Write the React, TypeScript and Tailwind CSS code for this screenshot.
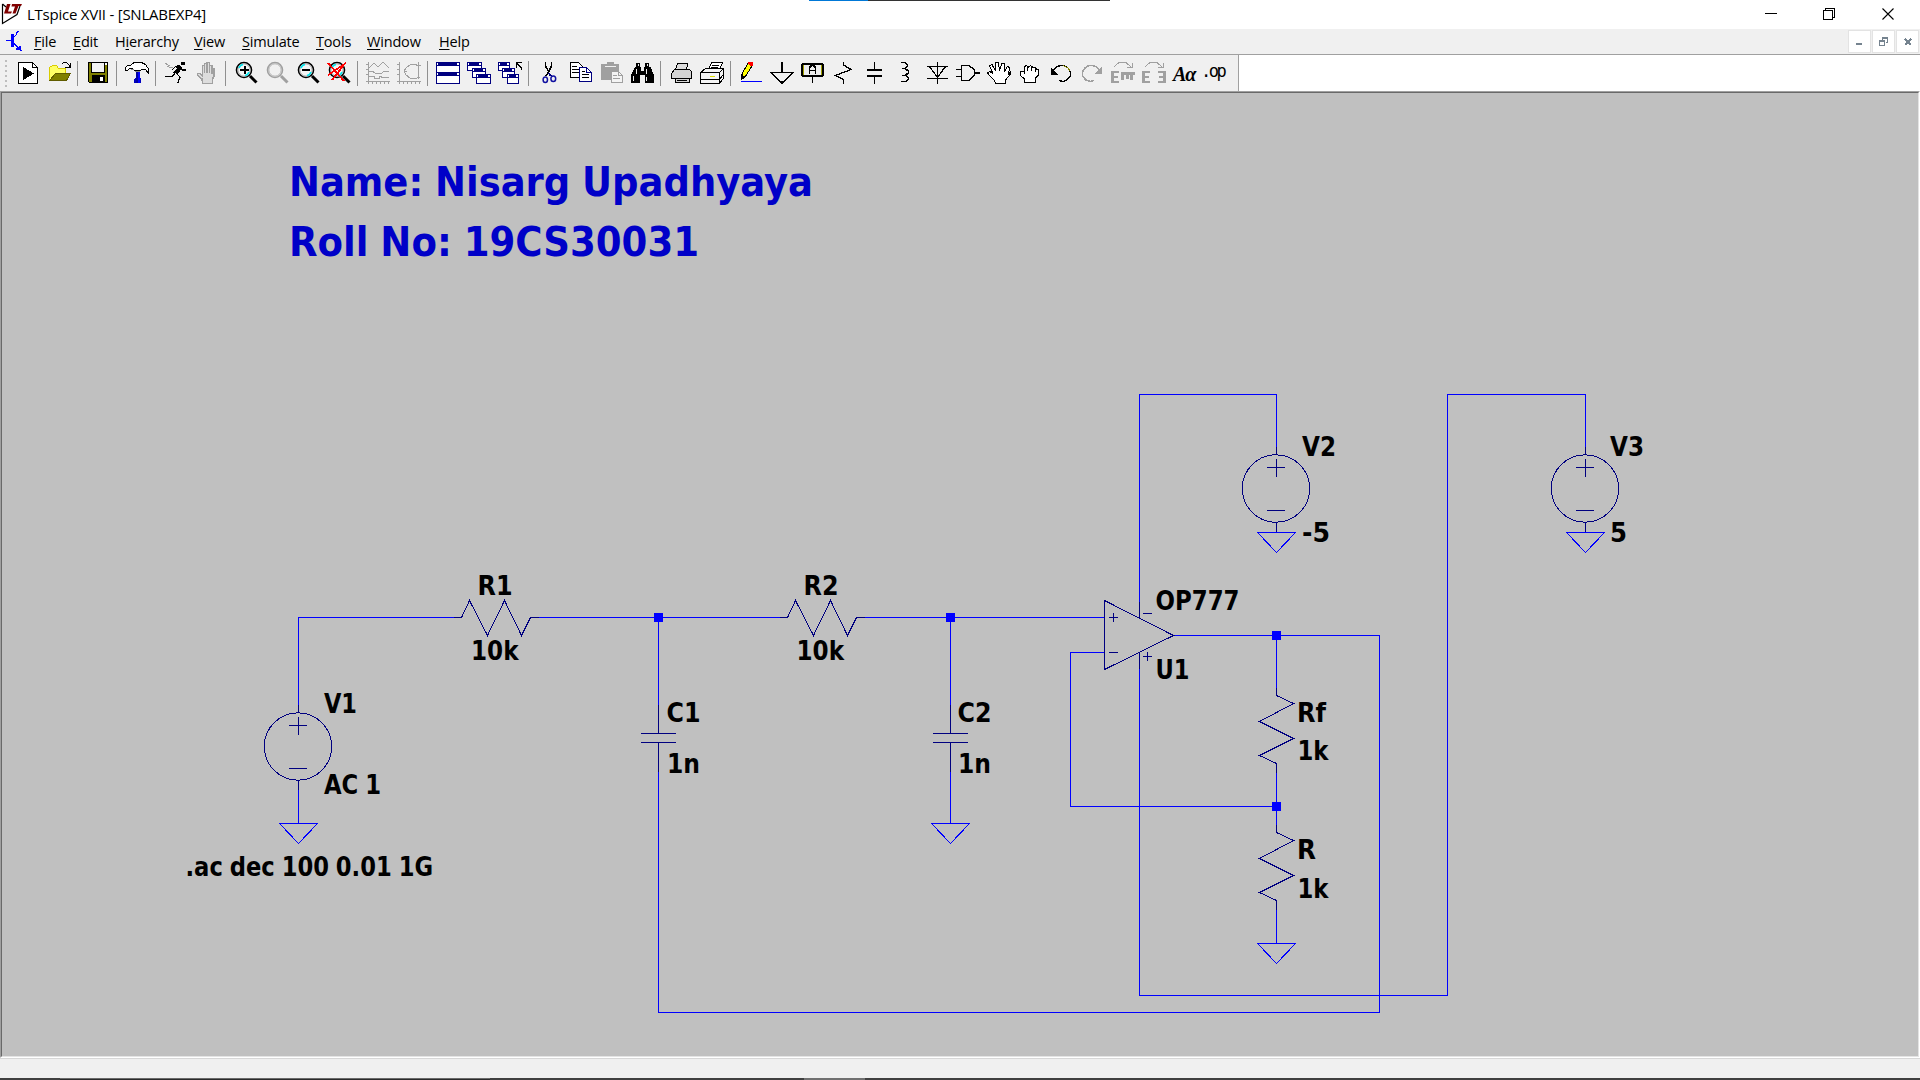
import React from "react";

type Children = { children?: React.ReactNode };

const Ico = ({ children }: Children) => (
  <span className="flex h-6 w-[31px] shrink-0 items-center pl-1">
    <svg width="24" height="24" viewBox="0 0 24 24" fill="none" stroke="#000" strokeWidth="1" shapeRendering="crispEdges">
      {children}
    </svg>
  </span>
);

const Sep = () => (
  <span className="flex h-6 w-2 shrink-0 pl-[3px]">
    <span className="h-[25px] w-px bg-[#909090]" />
  </span>
);

const G = "#a0a0a0";
const N = "#000080";

const Lens = ({ color = "#000", cyan = true, children }: Children & { color?: string; cyan?: boolean }) => (
  <Ico>
    <g shapeRendering="auto">
      <path d="M16 15L22.5 21.5" stroke={color} strokeWidth="3" />
      <circle cx="10" cy="9" r="7.5" stroke={color} strokeWidth="1.6" fill={cyan ? "#f4f4f4" : "none"} />
      <circle cx="10" cy="9" r="6.2" stroke={cyan ? "#a0a0a0" : "#b4b4b4"} strokeWidth="1" />
      {cyan && <path d="M5 7Q6 4 9 3.5M15 11Q14 14 11 14.5" stroke="#00e8f0" strokeWidth="1.6" />}
    </g>
    {children}
  </Ico>
);

const Win = ({ x, y, w, h }: { x: number; y: number; w: number; h: number }) => (
  <g stroke="none">
    <rect x={x} y={y} width={w} height={h} fill={N} />
    <rect x={x + 1} y={y + 4} width={w - 2} height={h - 5} fill="#fff" />
    <rect x={x + 1} y={y + 1} width="1" height="2" fill="#fff" />
    <rect x={x + w - 3} y={y + 1} width="2" height="2" fill="#fff" />
  </g>
);

const Toolbar = () => (
  <div className="flex h-9 w-[1239px] items-center border-r border-[#a0a0a0] bg-[#f0f0f0]">
    <div className="flex w-3 shrink-0 flex-col gap-[3px] pl-[5px]">
      {[0, 1, 2, 3, 4, 5].map((i) => (
        <span key={i} className="h-[2px] w-[2px] bg-[#bdbdbd]" />
      ))}
    </div>
    <Ico>
      <path d="M2.5 1.5H16.5L21.5 6.5V22.5H2.5Z" fill="#fff" />
      <path d="M16.5 1.5V6.5H21.5" />
      <path d="M7 6L18 12.5L7 19Z" fill="#000" stroke="none" />
    </Ico>
    <Ico>
      <path d="M2.5 19V6.5L5.5 4.5H9.5L11.5 7.5H18.5V12" fill="#ffff66" stroke="#d8cc00" />
      <path d="M2.5 19.5L8.5 12.5H23.5L19.5 19.5Z" fill="#808000" stroke="#605c00" />
      <path d="M14.5 3.5L16.5 1.5H19.5L22.5 4.5V6M23.5 2V6.5H18" />
    </Ico>
    <Sep />
    <Ico>
      <path d="M2.5 1.5H21.5V21.5H3.5L2.5 20Z" fill="#808000" />
      <path d="M5.5 1.5H18.5V11.5H5.5Z" fill="#f4f4f4" />
      <path d="M6 14H19V21H6Z" fill="#000" stroke="none" />
      <path d="M14 16H17V20H14ZM19 2H21V4H19Z" fill="#fff" stroke="none" />
    </Ico>
    <Sep />
    <Ico>
      <path d="M11 9H15V22H11Z" fill="#0000a0" stroke="none" />
      <path d="M13 9H15V22H13Z" fill="#0000ff" stroke="none" />
      <path d="M9 18L11 16V22H9ZM15 17H16V22H15Z" fill="#0000c0" stroke="none" />
      <path d="M0.5 9.5V6.5L2.5 4.5H5.5L7.5 2.5L9.5 1.5H16.5L20.5 3.5L23.5 8V12.5L20.5 8.5H17L15.5 9.5H9.5L7.5 7.5L4.5 7.5L2.5 9.5Z" fill="#fff" />
      <path d="M6 8.5H9M10 10H15" stroke="#888" />
    </Ico>
    <Sep />
    <Ico>
      <path d="M17 1H21V4H17Z" fill="#000" stroke="none" />
      <path d="M10 5L15 4L18 7L14 13L9 12L13 7Z" fill="#000" stroke="none" />
      <path d="M11 6L7.5 9.5M16 7L18 9L22 9M11 12L8.5 15.5H1M13 13L16 16L13.5 22.5" strokeWidth="1.4" />
      <path d="M1 2L4 4L6 4M3 5L7 7L9 6" stroke={G} />
    </Ico>
    <Ico>
      <path d="M7.5 22.5L7 18L2.5 14.5V12.5H5L7.5 15V4.5H9.5V12V2.5H12V12V1.5H14.5V12V4.5H17V13V7.5H19V15L17.5 18V22.5Z" fill="#ddd" stroke={G} strokeWidth="1.5" />
    </Ico>
    <Sep />
    <Lens><path d="M6 9H15M10.5 5V13" strokeWidth="2" /></Lens>
    <Lens color={G} cyan={false} />
    <Lens><path d="M6 9H14" strokeWidth="2" /></Lens>
    <Lens>
      <path d="M1 2L17 20M19 2L1 14M5 19L16 5" stroke="#f00" strokeWidth="1.8" />
    </Lens>
    <Sep />
    <Ico>
      <path d="M2.5 1V23M0 20.5H24M0 3.5H2M0 8.5H2M0 13.5H2M6.5 20V23M10.5 20V23M14.5 20V23M18.5 20V23M22.5 20V23M3 7L8 2L12 6L17 1L23 7M3 10.5H7L9 12H16L18 10.5H23M3 15.5H8V17.5H13V15.5H15V16.5H23" stroke={G} />
    </Ico>
    <Ico>
      <path d="M2.5 1V23M0 20.5H24M0 3.5H2M0 8.5H2M0 13.5H2M6.5 20V23M10.5 20V23M14.5 20V23M18.5 20V23M22.5 20V23M21.5 1V18M19 4H24M20 16H23M20 3L13 4L9 7L7 10L9 14L13 17L20 18M7 10H10" stroke={G} />
    </Ico>
    <Sep />
    <Ico>
      <Win x={0} y={1} w={24} h={11} />
      <Win x={0} y={11} w={24} h={12} />
    </Ico>
    <Ico>
      <Win x={0} y={1} w={15} h={9} />
      <Win x={5} y={7} w={14} h={10} />
      <Win x={9} y={13} w={15} h={10} />
    </Ico>
    <Ico>
      <Win x={0} y={1} w={12} h={9} />
      <Win x={4} y={7} w={13} h={10} />
      <Win x={9} y={13} w={12} h={10} />
      <path d="M23.5 9V7L19 2.5M18.5 7V1.5H24" />
    </Ico>
    <Sep />
    <Ico>
      <path d="M8.5 1V5L12 11M14.5 1V5L11 12L9 15" strokeWidth="1.7" />
      <g stroke="#1010a0" strokeWidth="1.5" shapeRendering="auto">
        <ellipse cx="8.3" cy="18.7" rx="2.2" ry="2.8" />
        <ellipse cx="16.3" cy="17.7" rx="2.4" ry="2.8" />
      </g>
      <path d="M11.5 12L14 15" stroke={N} strokeWidth="1.7" />
    </Ico>
    <Ico>
      <path d="M2.5 1.5H10.5L14.5 5.5V16.5H2.5Z" fill="#fff" />
      <path d="M4 5.5H9M4 8.5H11M4 11.5H11" />
      <path d="M11.5 6.5H18.5L23.5 11.5V20.5H11.5Z" fill="#fff" stroke={N} />
      <path d="M18.5 6.5V11.5H23.5" stroke={N} />
      <path d="M14 10.5H17M14 13.5H21M14 16.5H21" />
    </Ico>
    <Ico>
      <path d="M2 3H8V1H15V3H20V11H13V19H2Z" fill={G} stroke="none" />
      <path d="M6 5H17V6H6Z" fill="#f0f0f0" stroke="none" />
      <path d="M12.5 10.5H19.5L23.5 14.5V21.5H12.5Z" fill="#f4f4f4" stroke={G} />
      <path d="M19.5 10.5V14.5H23.5M14 14.5H18M14 17.5H21" stroke={G} />
    </Ico>
    <Ico>
      <path d="M6 2H10V6H11V10H14V6H15V2H19V6H21L22 10L24 14V22H15V14H10V22H1V14L3 10L5 6H6Z" fill="#000" stroke="none" />
      <path d="M6.5 8V13M16.5 8V13M3.5 15V20M16.5 16V20M8.5 3V5M17.5 3V5" stroke="#eee" />
    </Ico>
    <Sep />
    <Ico>
      <path d="M6.5 9L8.5 2.5H18.5L17.5 9" fill="#ddd" />
      <path d="M2.5 12.5L5.5 8.5H20.5L22.5 10.5V17.5H20.5V21.5H6.5V17.5H2.5Z" fill="#d4d4d4" />
      <path d="M6.5 17.5H20.5M8 19.5H18" />
    </Ico>
    <Ico>
      <path d="M8.5 9L11.5 1.5H22.5L19.5 9" fill="#fff" />
      <path d="M12 4.5H19M11 6.5H18" />
      <path d="M0.5 11.5L5.5 7.5H23.5V17L19.5 22.5H0.5Z" fill="#f4f4f4" />
      <path d="M0.5 11.5H19.5V22M19.5 11.5L23.5 7.5M0.5 18.5H19.5L23.5 13" />
      <path d="M10 15.5H15" stroke="#dddd00" />
    </Ico>
    <Sep />
    <Ico>
      <path d="M2 20.5H23" stroke="#00f" />
      <path d="M9 2L13 5L6 16L3 18V13Z" fill="#ff0" />
      <path d="M2 19V13L7 16Z" fill="#000" stroke="none" />
      <path d="M9 1H13L14 2V5H11L9 3Z" fill="#f00" stroke="none" />
    </Ico>
    <Ico><path d="M12 1V11M1 11.5H23L12 22Z" strokeWidth="1.5" /></Ico>
    <Ico>
      <rect x="1" y="3" width="21" height="12" rx="1.5" fill="#eee" strokeWidth="2" />
      <path d="M2.5 4V14M20.5 4V14" stroke="#a0a000" />
      <path d="M8.5 13V6.5L10.5 4.5H12.5L14.5 6.5V13M9 9.5H14" strokeWidth="1.8" />
      <path d="M11.5 16V22" strokeWidth="1.4" />
    </Ico>
    <Ico><path d="M11.5 1V4L19 8.5L3.5 14.5L11.5 18.5V23" strokeWidth="1.3" /></Ico>
    <Ico>
      <path d="M11.5 1V9M11.5 15V23" strokeWidth="1.4" />
      <path d="M4 8H19V10H4ZM4 14H19V16H4Z" fill="#000" stroke="none" />
    </Ico>
    <Ico><path d="M7 1.5H11L13.5 3.5V5.5L11 7.5H8M8 7.5H11L14.5 10V12L11 14.5H8M8 14.5H12L14.5 16.5V18.5L11.5 20.5H7" strokeWidth="1.5" /></Ico>
    <Ico>
      <path d="M2 5.5H23M2 17.5H23M12.5 1V23M4.5 5.5L12.5 16.5L20.5 5.5" strokeWidth="1.3" />
    </Ico>
    <Ico>
      <path d="M5.5 4.5H13L18.5 9V14L13 19.5H5.5ZM0 8.5H5M0 15.5H5M19 12H24" strokeWidth="1.4" />
    </Ico>
    <Ico>
      <path d="M8.5 22.5L7 19L1.5 13.5L0.5 11.5L3 10.5L6 13L2.5 4.5L5 3.5L8.5 10L8.5 1.5H11.5L12.5 9.5L15 2.5H17.5V10.5L20.5 5.5L22.5 6.5L21.5 13L23.5 11V13L18.5 19V22.5Z" fill="#fff" />
    </Ico>
    <Ico>
      <path d="M6.5 21.5V18L2.5 14.5V10.5H5.5L6.5 12V5.5L8.5 4.5L10.5 6L12.5 4.5L14.5 6H17.5L18.5 8L20.5 9V14L17.5 17V21.5Z" fill="#fff" />
      <path d="M9.5 6V10M13.5 6V10M17.5 7V11" />
    </Ico>
    <Ico>
      <path d="M3.5 10L8 5.5L12 4.5H15L19 7L21.5 11V15L18 19L14 20.5L10 19.5" strokeWidth="1.3" />
      <path d="M14 4.5L19 7L21 10" stroke="#808000" strokeWidth="1.3" />
      <path d="M2 7V14H9Z" fill="#000" stroke="none" />
    </Ico>
    <Ico>
      <path d="M20.5 10L16 5.5L12 4.5H9L5 7L2.5 11V15L6 19L10 20.5L14 19.5" stroke={G} strokeWidth="1.6" />
      <path d="M22 6V13H14Z" fill={G} stroke="none" />
    </Ico>
    <Ico>
      <path d="M3 6L8 1.5H15L20 6M21 2V6.5H16" stroke={G} />
      <path d="M0 10H8V12H3V15H7V17H3V20H8V22H0ZM10 11H24V14H22V19H19V14H18V18H15V14H13V19H10Z" fill={G} stroke="none" />
    </Ico>
    <Ico>
      <path d="M3 6L8 1.5H15L20 6M21 2V6.5H16" stroke={G} />
      <path d="M0 10H8V12H3V15H7V17H3V20H8V22H0ZM24 10H16V12H21V15H17V17H21V20H16V22H24Z" fill={G} stroke="none" />
    </Ico>
    <span className="flex h-6 w-[31px] shrink-0 items-center pl-1 pt-px font-['Liberation_Serif',serif] text-[20px] font-bold italic tracking-[-1px]">Aα</span>
    <span className="flex h-6 w-[31px] shrink-0 items-center pb-[2px] pl-px font-['DejaVu_Sans_Mono',monospace] text-[17px] tracking-[-2.5px]">.op</span>
  </div>
);

const menus: [string, string, string, string][] = [
  ["", "F", "ile", "w-[39px]"],
  ["", "E", "dit", "w-[42px]"],
  ["H", "i", "erarchy", "w-[79px]"],
  ["", "V", "iew", "w-[48px]"],
  ["", "S", "imulate", "w-[74px]"],
  ["", "T", "ools", "w-[51px]"],
  ["", "W", "indow", "w-[72px]"],
  ["", "H", "elp", "w-[60px]"],
];

const MdiButton = ({ children }: Children) => (
  <span className="flex h-[23px] w-[23px] items-center justify-center border border-[#e3e3e3] bg-white">
    <svg width="11" height="11" viewBox="0 0 11 11" fill="none" stroke="#75838f" shapeRendering="crispEdges">
      {children}
    </svg>
  </span>
);

const wires = [
  "M298 704V617H453",
  "M538 617H779",
  "M864 617H1104",
  "M298 788V823",
  "M658 617V704",
  "M658 771V1012H1379V635H1173",
  "M950 617V704",
  "M950 771V823",
  "M1139 601V394H1276V447",
  "M1104 652H1070V806H1276",
  "M1139 668V995H1447V394H1585V447",
  "M1276 635V687",
  "M1276 771V824",
  "M1276 909V943",
];

const resistorsH = [453, 779];
const resistorsV = [687, 824];
const sources = [[298, 746], [1276, 488], [1585, 488]];
const grounds = [[298, 823], [950, 823], [1276, 532], [1585, 532], [1276, 943]];
const junctions = [[658, 617], [950, 617], [1276, 635], [1276, 806]];

/* text, left, baseline, advance width */
const labels: [string, number, number, number][] = [
  ["R1", 477.5, 595, 35],
  ["10k", 471, 660, 47.5],
  ["R2", 803.5, 595, 35],
  ["10k", 796.5, 660, 47.5],
  ["V1", 324, 713, 33],
  ["AC 1", 324, 794, 57],
  ["C1", 666.5, 722, 34],
  ["1n", 667, 773, 33],
  ["C2", 957.5, 722, 34],
  ["1n", 958, 773, 33],
  [".ac dec 100 0.01 1G", 185.5, 876, 247.5],
  ["OP777", 1155.5, 610, 84],
  ["U1", 1155.5, 679, 34],
  ["Rf", 1297, 722, 29],
  ["1k", 1297.5, 760, 31],
  ["R", 1297, 859, 19],
  ["1k", 1297.5, 898, 31],
  ["V2", 1302, 456, 34],
  ["-5", 1302, 542, 28],
  ["V3", 1610, 456, 34],
  ["5", 1610, 542, 17],
];

const Schematic = () => (
  <svg width="1916" height="963" viewBox="2 93 1916 963" className="block">
    <g transform="translate(.5 .5)" fill="none" stroke="#00f" shapeRendering="crispEdges">
      {wires.map((d) => <path key={d} d={d} />)}
      {grounds.map(([x, y]) => <path key={`${x}-${y}`} d={`M${x - 19} ${y}H${x + 19}L${x} ${y + 20}Z`} />)}
      <g stroke="#000080">
        {resistorsH.map((x) => (
          <path key={x} d={`M${x} 617h8l8 -17l18 35l17 -35l17 35l9 -18h8`} />
        ))}
        {resistorsV.map((y) => (
          <path key={y} d={`M1276 ${y}v8l17 8l-34 18l34 17l-34 17l17 8v9`} />
        ))}
        {sources.map(([x, y]) => (
          <g key={x}>
            <circle cx={x - 0.5} cy={y} r="33.7" />
            <path d={`M${x} ${y - 42}v8M${x} ${y + 33}v10M${x - 9.5} ${y - 21}h18M${x} ${y - 30}v18M${x - 9.5} ${y + 22}h18`} />
          </g>
        ))}
        {[658, 950].map((x) => (
          <path key={x} d={`M${x} 704V733M${x} 742V771M${x - 17.5} 733h35M${x - 17.5} 742h35`} />
        ))}
        <path d="M1104 600V669L1173 635ZM1108.5 617h9M1113 612.5v9M1108.5 652h9M1139 601v17M1139 652v16M1142.5 613h9M1142.5 656h9M1147 651.5v9" />
      </g>
    </g>
    <g fill="#00f" shapeRendering="crispEdges">
      {junctions.map(([x, y]) => <rect key={`${x}-${y}`} x={x - 4} y={y - 4} width="9" height="9" />)}
    </g>
    <g className="font-['DejaVu_Sans_Condensed','DejaVu_Sans',sans-serif] text-[26px] font-bold [word-spacing:-1px]">
      {labels.map(([t, x, y, w]) => (
        <text key={`${x}-${y}`} x={x} y={y} textLength={w} lengthAdjust="spacingAndGlyphs">{t}</text>
      ))}
    </g>
    <g fill="#0000c8" className="font-['DejaVu_Sans_Condensed','DejaVu_Sans',sans-serif] text-[41px] font-bold [word-spacing:-1px]">
      <text x="289" y="195.5" textLength="524" lengthAdjust="spacingAndGlyphs">Name: Nisarg Upadhyaya</text>
      <text x="289" y="255.5" textLength="410" lengthAdjust="spacingAndGlyphs">Roll No: 19CS30031</text>
    </g>
  </svg>
);

export default function App() {
  return (
    <div className="flex h-[1080px] w-[1920px] flex-col overflow-hidden bg-white font-['Open_Sans','Noto_Sans',sans-serif] text-black">
      <header className="flex h-[29px] shrink-0 items-start bg-white">
        <svg width="24" height="29" viewBox="0 0 24 29" className="shrink-0" fill="none">
          <path d="M2.5 4V23.5L17 14.5L20 6" stroke="#000" strokeWidth="1.2" />
          <path d="M2.5 4L6 7" stroke="#000" strokeWidth="1.2" />
          <path d="M7 4H10.5L8 11.5H12L11 13.5H4ZM12 4H22L21 6H18.5L15.5 13.5H12.5L15 6.5H11.5Z" fill="#800000" />
        </svg>
        <h1 className="w-[785px] whitespace-nowrap pl-[3px] pt-[3px] text-[15px] leading-[22px] tracking-[-0.24px]">LTspice XVII - [SNLABEXP4]</h1>
        <span className="h-px w-[59px] bg-[#0078d7]" />
        <span className="h-px w-[242px] bg-[#333]" />
        <span className="grow" />
        <svg width="155" height="29" viewBox="1765 0 155 29" fill="none" stroke="#000">
          <path d="M1765 13.5H1777M1823.5 10.5H1832.5V19.5H1823.5ZM1825.5 10V8.5H1834.5V17.5H1833" shapeRendering="crispEdges" />
          <path d="M1882.5 8.5L1893.5 19.5M1893.5 8.5L1882.5 19.5" strokeWidth="1.1" />
        </svg>
      </header>
      <nav className="flex h-[25px] shrink-0 items-center bg-[#f0f0f0] text-[14.5px] leading-[24px] tracking-[-0.18px]">
        <svg width="34" height="25" viewBox="0 29 34 25" className="shrink-0" fill="none" stroke="#00f" shapeRendering="crispEdges">
          <path d="M6 40.5H12M19.5 30.5L16 33V35L13 38" />
          <path d="M12.5 34V47" strokeWidth="3" />
          <path d="M14 43L21 51" strokeWidth="1.5" />
          <path d="M16 49H20V46" strokeWidth="1.5" />
        </svg>
        {menus.map(([a, u, b, w]) => (
          <span key={u + b} className={`${w} shrink-0 whitespace-nowrap`}>
            {a}<span className="underline underline-offset-2">{u}</span>{b}
          </span>
        ))}
        <span className="grow" />
        <div className="flex gap-px pr-px">
          <MdiButton><path d="M2 8H8" strokeWidth="2" /></MdiButton>
          <MdiButton><path d="M1.5 5V9.5H6.5V5M1 5H7M4 2H10M9.5 2V6.5H8M4.5 2V4" strokeWidth="1.4" /></MdiButton>
          <MdiButton><path d="M3 3L9 9M9 3L3 9" strokeWidth="2" /></MdiButton>
        </div>
      </nav>
      <div className="flex h-[37px] shrink-0 items-end border-t border-[#a0a0a0] bg-white">
        <Toolbar />
      </div>
      <main className="h-[967px] shrink-0 border-b border-l border-r border-t border-b-white border-l-[#a0a0a0] border-r-white border-t-[#a0a0a0]">
        <div className="h-[965px] border border-b-[#e3e3e3] border-l-[#696969] border-r-[#e3e3e3] border-t-[#696969] bg-[#c0c0c0]">
          <Schematic />
        </div>
      </main>
      <footer className="h-5 shrink-0 border-t border-[#d7d7d7] bg-[#f0f0f0]" />
      <div className="flex h-[2px] shrink-0 bg-[#404040]">
        <span className="ml-[60px] w-[430px] border-t border-[#6a6a6a] bg-[#2b2b2b]" />
        <span className="ml-[314px] w-[61px] bg-[#707070]" />
      </div>
    </div>
  );
}
